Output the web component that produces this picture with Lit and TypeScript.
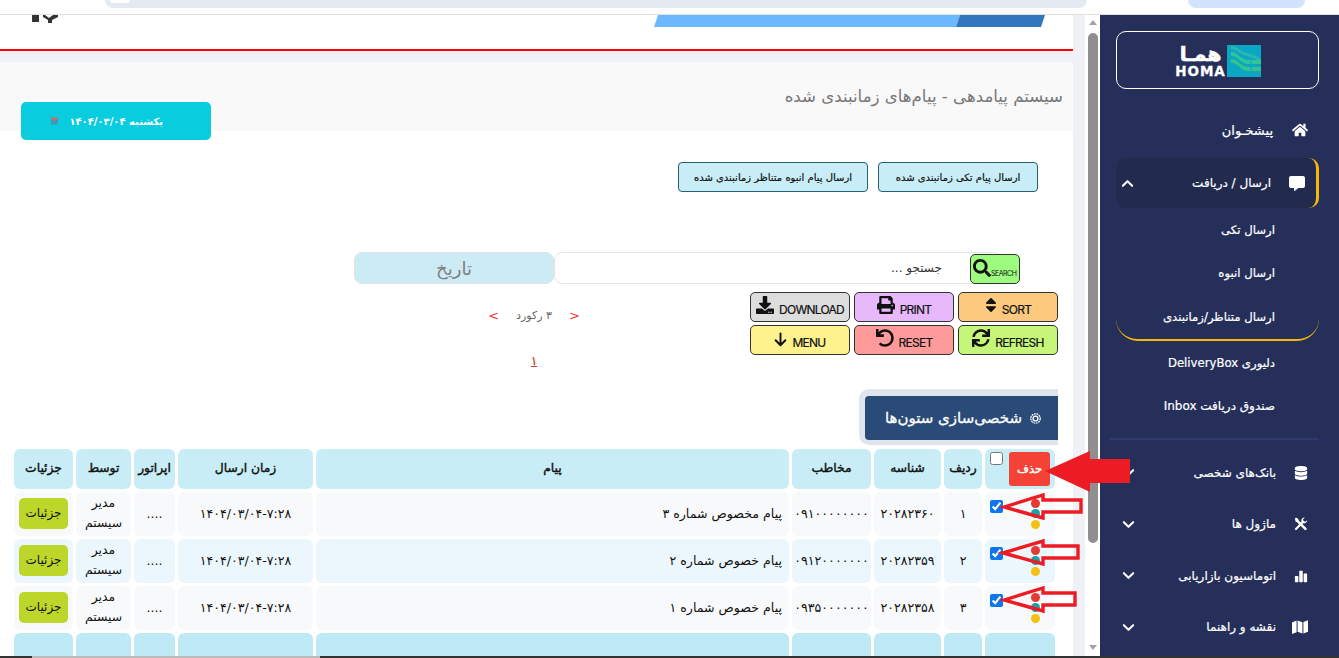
import { LitElement, html, css, svg } from "lit";
import { customElement } from "lit/decorators.js";

const fa = (vb: string, d: string, cls = "") =>
  html`<svg class=${cls} viewBox=${vb} fill="currentColor"><path d=${d}></path></svg>`;

const I = {
  home: fa("0 0 576 512", "M280.37 148.26L96 300.11V464a16 16 0 0 0 16 16l112.06-.29a16 16 0 0 0 15.92-16V368a16 16 0 0 1 16-16h64a16 16 0 0 1 16 16v95.64a16 16 0 0 0 16 16.05L464 480a16 16 0 0 0 16-16V300L295.67 148.26a12.19 12.19 0 0 0-15.3 0zM571.6 251.47L488 182.56V44.05a12 12 0 0 0-12-12h-56a12 12 0 0 0-12 12v72.61L318.47 43a48 48 0 0 0-61 0L4.34 251.47a12 12 0 0 0-1.6 16.9l25.5 31A12 12 0 0 0 45.15 301l235.22-193.74a12.19 12.19 0 0 1 15.3 0L530.9 301a12 12 0 0 0 16.9-1.6l25.5-31a12 12 0 0 0-1.7-16.93z"),
  comment: fa("0 0 512 512", "M448 32H64C29 32 0 61 0 96v256c0 35 29 64 64 64h96v84c0 10 11 15 19 9l125-93h144c35 0 64-29 64-64V96c0-35-29-64-64-64z"),
  db: fa("0 0 448 512", "M448 73.143v45.714C448 159.143 347.667 192 224 192S0 159.143 0 118.857V73.143C0 32.857 100.333 0 224 0s224 32.857 224 73.143zM448 176v102.857C448 319.143 347.667 352 224 352S0 319.143 0 278.857V176c48.125 33.143 136.208 48.572 224 48.572S399.874 209.143 448 176zm0 160v102.857C448 479.143 347.667 512 224 512S0 479.143 0 438.857V336c48.125 33.143 136.208 48.572 224 48.572S399.874 369.143 448 336z"),
  tools: html`<svg viewBox="0 0 16 16" fill="currentColor"><path d="M1.4 12.9 10.2 4.1l1.7 1.7-8.8 8.8a1.2 1.2 0 0 1-1.7-1.7z"></path><path d="M15 3.6a3.6 3.6 0 0 1-4.9 3.4L8.6 5.5A3.6 3.6 0 0 1 12.4.6L10.3 2.7l.6 2.1 2.1.6 2-1.8z"></path><path d="M1 1.7 2.3.7l2.6 1.6.3 1.4 8.9 8.8c.6.6.6 1.6 0 2.1s-1.5.6-2.1 0L3.2 5.8 1.9 5.5z"></path></svg>`,
  chart: html`<svg viewBox="0 0 16 16" fill="currentColor"><rect x="1" y="8" width="4" height="7" rx=".8"></rect><rect x="6" y="2" width="4" height="13" rx=".8"></rect><rect x="11" y="5" width="4" height="10" rx=".8"></rect></svg>`,
  map: html`<svg class="wide" viewBox="0 0 16 16" fill="currentColor"><path d="M0 3.4 4.6 1.6v11.7L0 15zM5.6 1.6l4.8 1.6v11.2l-4.8-1.6zM11.4 3.1 16 1.2v11.6l-4.6 1.8z"></path></svg>`,
  search: fa("0 0 512 512", "M505 442.7L405.3 343c-4.5-4.5-10.6-7-17-7H372c27.6-35.3 44-79.7 44-128C416 93.1 322.9 0 208 0S0 93.1 0 208s93.1 208 208 208c48.3 0 92.7-16.4 128-44v16.3c0 6.4 2.5 12.5 7 17l99.7 99.7c9.4 9.4 24.6 9.4 33.9 0l28.3-28.3c9.4-9.4 9.4-24.6.1-34zM208 336c-70.7 0-128-57.2-128-128 0-70.7 57.2-128 128-128 70.7 0 128 57.2 128 128 0 70.7-57.2 128-128 128z"),
  sort: fa("0 0 320 512", "M41 288h238c21.4 0 32.1 25.9 17 41L177 448c-9.4 9.4-24.6 9.4-33.9 0L24 329c-15.1-15.1-4.4-41 17-41zm255-105L177 64c-9.4-9.4-24.6-9.4-33.9 0L24 183c-15.1 15.1-4.4 41 17 41h238c21.4 0 32.1-25.9 17-41z"),
  print: fa("0 0 512 512", "M448 192V77.25c0-8.49-3.37-16.62-9.37-22.63L393.37 9.37c-6-6-14.14-9.37-22.63-9.37H96C78.33 0 64 14.33 64 32v160c-35.35 0-64 28.65-64 64v112c0 8.84 7.16 16 16 16h48v96c0 17.67 14.33 32 32 32h320c17.67 0 32-14.33 32-32v-96h48c8.84 0 16-7.16 16-16V256c0-35.35-28.65-64-64-64zm-64 256H128v-96h256v96zm0-224H128V64h192v48c0 8.84 7.16 16 16 16h48v96zm48 72c-13.25 0-24-10.75-24-24 0-13.26 10.75-24 24-24s24 10.74 24 24c0 13.25-10.75 24-24 24z"),
  download: fa("0 0 512 512", "M216 0h80c13.3 0 24 10.7 24 24v168h87.7c17.8 0 26.7 21.5 14.1 34.1L269.7 378.3c-7.5 7.5-19.8 7.5-27.3 0L90.1 226.1c-12.6-12.6-3.7-34.1 14.1-34.1H192V24c0-13.3 10.7-24 24-24zm296 376v112c0 13.3-10.7 24-24 24H24c-13.3 0-24-10.7-24-24V376c0-13.3 10.7-24 24-24h146.7l49 49c20.1 20.1 52.5 20.1 72.6 0l49-49H488c13.3 0 24 10.7 24 24zm-124 88c0-11-9-20-20-20s-20 9-20 20 9 20 20 20 20-9 20-20zm64 0c0-11-9-20-20-20s-20 9-20 20 9 20 20 20 20-9 20-20z"),
  undo: fa("0 0 512 512", "M212.333 224.333H12c-6.627 0-12-5.373-12-12V12C0 5.373 5.373 0 12 0h48c6.627 0 12 5.373 12 12v78.112C117.773 39.279 184.26 7.47 258.175 8.007c136.906.994 246.448 111.623 246.157 248.532C504.041 393.258 393.12 504 256.333 504c-64.089 0-122.496-24.313-166.51-64.215-5.099-4.622-5.334-12.554-.467-17.42l33.967-33.967c4.474-4.474 11.662-4.717 16.401-.525C170.76 415.336 211.58 432 256.333 432c97.268 0 176-78.716 176-176 0-97.267-78.716-176-176-176-58.496 0-110.28 28.476-142.274 72.333h98.274c6.627 0 12 5.373 12 12v48c0 6.627-5.373 12-12 12z"),
  sync: fa("0 0 512 512", "M440.65 12.57l4 82.77A247.16 247.16 0 0 0 255.83 8C134.73 8 33.91 94.92 12.29 209.82A12 12 0 0 0 24.09 224h49.05a12 12 0 0 0 11.67-9.26 175.91 175.91 0 0 1 317-56.94l-101.46-4.86a12 12 0 0 0-12.57 12v47.41a12 12 0 0 0 12 12H500a12 12 0 0 0 12-12V12a12 12 0 0 0-12-12h-47.37a12 12 0 0 0-11.98 12.57zM255.83 432a175.61 175.61 0 0 1-146-77.8l101.8 4.87a12 12 0 0 0 12.57-12v-47.4a12 12 0 0 0-12-12H12a12 12 0 0 0-12 12V500a12 12 0 0 0 12 12h47.35a12 12 0 0 0 12-12.6l-4.15-82.57A247.17 247.17 0 0 0 255.83 504c121.11 0 221.93-86.92 243.55-201.82a12 12 0 0 0-11.8-14.18h-49.05a12 12 0 0 0-11.67 9.26A175.86 175.86 0 0 1 255.83 432z"),
  arrow: html`<svg viewBox="0 0 16 18" fill="none" stroke="currentColor" stroke-width="2.4" stroke-linecap="round" stroke-linejoin="round"><path d="M8 1.5V16M2 10l6 6 6-6"></path></svg>`,
};

const chevron = (up = false) =>
  html`<svg class="chev" viewBox="0 0 14 9" fill="none" stroke="currentColor" stroke-width="2.2" stroke-linecap="round" stroke-linejoin="round"><path d=${up ? "M2 7l5-5 5 5" : "M2 2l5 5 5-5"}></path></svg>`;

const rows = [
  { n: "۱", id: "۲۰۲۸۲۳۶۰", to: "۰۹۱۰۰۰۰۰۰۰۰", msg: "پیام مخصوص شماره ۳" },
  { n: "۲", id: "۲۰۲۸۲۳۵۹", to: "۰۹۱۲۰۰۰۰۰۰۰", msg: "پیام خصوص شماره ۲" },
  { n: "۳", id: "۲۰۲۸۲۳۵۸", to: "۰۹۳۵۰۰۰۰۰۰۰", msg: "پیام خصوص شماره ۱" },
];

const tools = [
  { t: "SORT", i: I.sort, c: "sort" },
  { t: "PRINT", i: I.print, c: "print" },
  { t: "DOWNLOAD", i: I.download, c: "download" },
  { t: "REFRESH", i: I.sync, c: "refresh" },
  { t: "RESET", i: I.undo, c: "reset" },
  { t: "MENU", i: I.arrow, c: "menu" },
];

const outlineArrow = (y: number, tip: number, right: number) => svg`<polygon points="${tip},${y} 1043,${y - 12} 1043,${y - 7} ${right},${y - 7} ${right},${y + 5} 1043,${y + 5} 1043,${y + 11}" fill="none" stroke="#ed1c24" stroke-width="3.4"></polygon>`;

@customElement("app-root")
export class AppRoot extends LitElement {
  static styles = css`
    :host { display: block; width: 1339px; height: 658px; overflow: hidden; position: relative; background: #fff;
      font-family: "DejaVu Sans", "Noto Sans", sans-serif; color: #111; }
    * { box-sizing: border-box; }
    svg { display: block; }
    .chrome { height: 15px; border-bottom: 1px solid #e0e0e0; display: flex; direction: ltr; padding-left: 105px; }
    .omni { width: 982px; height: 8px; background: #e5e9f2; border-radius: 0 0 14px 14px; padding-left: 5px; }
    .omni i { display: block; width: 20px; height: 3px; background: #fff; border-radius: 0 0 10px 10px; }
    .pill { width: 117px; height: 8px; margin-left: 101px; background: #d3e3fd; border-radius: 0 0 14px 14px; }
    .body { height: 641px; display: grid; grid-template-columns: 239px 27px 1073px; direction: rtl; overflow: hidden; }
    .strip { height: 2px; background: #333; padding-left: 32px; direction: ltr; }
    .strip i { display: block; width: 288px; height: 2px; background: #bbb; }

    /* sidebar */
    .side { background: #262f5a; color: #fff; padding: 16px 20px 0 16px; }
    .logo { height: 58px; border: 1px solid #fff; border-radius: 10px; display: flex; direction: ltr; justify-content: center; align-items: center; padding-top: 1px; }
    .logo-text { width: 53px; height: 32px; display: flex; flex-direction: column; align-items: center; line-height: 1; font-weight: 700; color: #fff; }
    .logo-fa { font-size: 20px; height: 20px; line-height: 18px; direction: rtl; white-space: nowrap; -webkit-text-stroke: .6px #fff; }
    .logo-en { font-size: 13.5px; height: 12px; line-height: 12px; letter-spacing: 0.9px; -webkit-text-stroke: .3px #fff; }
    .logo-box { width: 34px; height: 32px; }
    .nav { margin-top: 16px; }
    .item { height: 50px; display: flex; align-items: center; padding: 0 11px 0 6px; gap: 17px; font-size: 12px; -webkit-text-stroke: .2px #fff; }
    .item .ic { width: 16px; height: 16px; flex: none; display: flex; align-items: center; justify-content: flex-start; }
    .item .ic svg { width: 14px; height: 14px; }
    .item .ic svg.wide, .item.first .ic svg { width: 16px; height: 16px; }
    .item.first { font-size: 13px; gap: 19px; }
    .chev { width: 13px; height: 9px; margin-right: auto; flex: none; }
    .item.active { background: #222a4e; margin-top: 3px; border-right: 3px solid #f5b80a; border-radius: 10px; padding: 0 11px 0 5px; gap: 18px; height: 50px; }
    .item.active .ic svg { width: 16px; height: 16px; }
    .item.tall { height: 51.5px; gap: 16px; }
    .subs { border-bottom: 2px solid #f5b80a; border-radius: 0 0 22px 22px; height: 133px; }
    .sub { height: 43.5px; display: flex; align-items: center; padding-right: 44px; font-size: 11.7px; -webkit-text-stroke: .2px #fff; }
    .sub.after { height: 43px; font-size: 12px; }
    .sub.deliv { font-size: 11.7px; }
    .sep { height: 2px; background: #2f3a70; margin: 11px 0 7px 0; width: 210px; }

    .rail { display: grid; grid-template-columns: 15px 12px; }
    .rail-fill { background: #f0f1f6; }
    .track { background: #fff; display: flex; flex-direction: column; align-items: center; padding-top: 5px; }
    .tri { width: 0; height: 0; flex: none; border-left: 4px solid transparent; border-right: 4px solid transparent; border-bottom: 5px solid #a3a3a3; }
    .thumb { width: 10px; height: 510px; flex: none; background: #8f8f8f; border-radius: 5px; margin-top: 8px; }
    .tri.down { border-bottom: 0; border-top: 5px solid #a3a3a3; margin-top: 102px; }

    /* main */
    .main { overflow: hidden; display: flex; flex-direction: column; height: 641px; background: #fff; }
    .head { height: 36px; flex: none; border-bottom: 2px solid #f00; padding-right: 28px; display: flex; justify-content: space-between; align-items: flex-start; }
    .banner { width: 391px; height: 12px; }
    .glyph { width: 30px; height: 8px; margin-left: 30px; }
    .gap { height: 11px; flex: none; background: #f0f1f6; }
    .titlebar { height: 69px; flex: none; background: #f9f9fa; display: flex; align-items: center; padding: 0 10px 0 0; font-size: 16.6px; color: #777; }
    .date { width: 190px; height: 38px; flex: none; margin: -29px 0 0 21px; align-self: flex-end; background: #09cddf; border-radius: 5px; color: #fff; font-size: 10px; font-weight: 700; display: flex; align-items: center; padding-right: 48px; gap: 11px; }
    .date svg { width: 7px; height: 8px; opacity: .85; }
    .acts { display: flex; gap: 10px; margin: 22px 35px 0 0; flex: none; }
    .acts div { height: 30px; background: #c8edf6; border: 1px solid #25606f; border-radius: 4px; font-size: 10px; -webkit-text-stroke: .2px #111; display: flex; align-items: center; justify-content: center; color: #111; }
    .a1 { width: 160px; } .a2 { width: 190px; }
    .searchrow { display: flex; margin: 60px 53px 0 0; height: 32px; flex: none; align-items: flex-start; }
    .sbtn { width: 50px; height: 30px; margin: 2px 0 0 -32px; position: relative; z-index: 1; background: #9dfb7f; border: 1px solid #333; border-radius: 5px; direction: ltr; display: flex; align-items: center; padding: 0 0 0 2px; font-family: Inter, sans-serif; font-size: 7px; letter-spacing: -0.5px; }
    .sbtn svg { width: 18px; height: 18px; margin-top: -3px; }
    .sbtn span { margin-top: 9px; }
    .sinput { width: 448px; height: 32px; border: 1.5px solid #e4e4e4; border-radius: 8px; background: #fff; display: flex; align-items: center; padding-right: 59px; font-size: 12px; color: #333; }
    .sdate { width: 200px; height: 32px; background: #cdebf5; border: 1.5px solid #e2e2e2; border-radius: 8px; color: #808080; font-size: 18px; display: flex; align-items: center; justify-content: center; }
    .toolrow { display: flex; height: 63px; margin: 8px 15px 0 0; flex: none; }
    .tools { width: 308px; display: grid; grid-template-columns: repeat(3, 100px); grid-auto-rows: 30px; gap: 3px 4px; }
    .tool { border: 1px solid #333; border-radius: 5px; display: flex; direction: ltr; align-items: center; justify-content: center; gap: 5px; font-family: Inter, sans-serif; font-size: 12px; letter-spacing: -0.75px; color: #111; -webkit-text-stroke: .2px #111; }
    .tool svg { width: 18px; height: 18px; flex: none; margin-top: -4px; }
    .tool.sort svg { width: 12px; }
    .tool.menu svg { width: 13px; height: 15px; margin-top: -1px; }
    .tool span { margin-top: 5px; }
    .sort { background: #fdc97e; } .print { background: #e7b9fa; } .download { background: #ddd; }
    .refresh { background: #c5f67a; } .reset { background: #ff9a9a; } .menu { background: #fdf28b; }
    .pager { width: 200px; margin-right: 116px; display: flex; flex-direction: column; align-items: center; }
    .pline { display: flex; direction: ltr; gap: 17px; align-items: center; margin-top: 14px; font-size: 11px; color: #666; height: 18px; flex: none; }
    .pline span { direction: rtl; }
    .pline b { color: #f33; font-weight: 400; font-size: 13px; }
    .pnum { margin-top: 19px; color: #c0392b; font-size: 11.5px; line-height: 14px; text-decoration: underline; -webkit-text-stroke: .3px #c0392b; flex: none; transform: translateY(11px); }
    .cust { width: 199px; height: 56px; flex: none; margin: 34px 15px 0 0; background: #e0e4ec; border-top-left-radius: 10px; border-bottom-left-radius: 10px; padding: 7px 0 5px 6px; }
    .cust div { height: 44px; background: #2a4a78; border-radius: 4px 0 0 4px; color: #fff; font-size: 15px; -webkit-text-stroke: .3px #fff; display: flex; align-items: center; padding-right: 16px; gap: 7px; }
    .cust svg { width: 13px; height: 13px; }
    .table { margin: 4px 18px 0 14px; display: grid; flex: none; grid-template-columns: 70px 38px 67px 79px 473px 135px 41px 55px 59px; grid-template-rows: 40px 44px 44px 44px 30px; gap: 3px; font-size: 12.6px; }
    .c { border-radius: 6px; display: flex; align-items: center; justify-content: center; text-align: center; padding-bottom: 2px; }
    .h { background: #c8edf6; font-size: 12.3px; -webkit-text-stroke: .4px #111; }
    .r1 { background: #f8f9fa; } .r2 { background: #ebf7fd; }
    .f { background: #bfeaf5; }
    .msg { justify-content: flex-start; padding-right: 7px; }
    .phone { letter-spacing: -0.9px; }
    .headcheck { justify-content: flex-start; align-items: flex-start; padding: 3px 5px; }
    .del { width: 41px; height: 34px; background: #f44336; color: #fff; border-radius: 3px; font-size: 11.5px; -webkit-text-stroke: .4px #fff; display: flex; align-items: center; justify-content: center; flex: none; }
    .check { margin: 0 auto 0 0; width: 13px; height: 13px; accent-color: #0b76ef; flex: none; }
    .rowcheck { justify-content: flex-start; align-items: flex-start; padding: 6.5px 15.5px 0 5px; }
    .rowcheck .check { margin-top: 1px; margin-right: auto; }
    .dots { display: flex; flex-direction: column; gap: 1.5px; flex: none; }
    .dots i { display: block; width: 9px; height: 9px; border-radius: 50%; }
    .dot-r { background: #e53935; } .dot-t { background: #12a5a5; } .dot-y { background: #f5c010; }
    .by { line-height: 20px; font-size: 12.4px; }
    .det { width: 49px; height: 31px; background: #bcd62a; border-radius: 5px; font-size: 12px; display: flex; align-items: center; justify-content: center; }
    .annot { position: absolute; left: 0; top: 0; width: 1339px; height: 658px; pointer-events: none; }
  `;

  render() {
    return html`
      <div class="chrome"><div class="omni"><i></i></div><div class="pill"></div></div>
      <div class="body">
        ${this.sidebar()}
        <div class="rail"><div class="track"><div class="tri"></div><div class="thumb"></div><div class="tri down"></div></div><div class="rail-fill"></div></div>
        ${this.main()}
      </div>
      <div class="strip"><i></i></div>
      <svg class="annot" viewBox="0 0 1339 658">
        <polygon points="1045,471 1090,451 1090,459 1130,459 1130,483 1090,483 1090,492" fill="#ed1c24"></polygon>
        ${outlineArrow(507, 1004, 1081)}
        ${outlineArrow(553, 1003, 1078)}
        ${outlineArrow(600, 1004, 1075)}
      </svg>
    `;
  }

  sidebar() {
    return html`<aside class="side">
      <div class="logo">
        <div class="logo-text"><span class="logo-fa">همـا</span><span class="logo-en">HOMA</span></div>
        <svg class="logo-box" viewBox="0 0 34 32">
          <rect width="34" height="32" fill="#0aa6c4"></rect>
          <path d="M4 1c7 0 9 6 16 7 5 1 9 3 14 6v3c-5-3-9-5-14-6C13 10 11 4 4 4z" fill="#2cb9ac"></path>
          <path d="M4 7c7 0 9 7 16 8h14v4H20C13 18 11 11 4 11z" fill="#2fc49a"></path>
          <path d="M4 14c7 0 9 7 16 8h14v4H20C13 25 11 18 4 18z" fill="#34c28e"></path>
          <path d="M24 12v16" stroke="#0aa6c4" stroke-width="1"></path>
        </svg>
      </div>
      <nav class="nav">
        <div class="item first"><span class="ic">${I.home}</span><span>پیشخـوان</span></div>
        <div class="item active"><span class="ic">${I.comment}</span><span>ارسال / دریافت</span>${chevron(true)}</div>
        <div class="subs">
          <div class="sub">ارسال تکی</div>
          <div class="sub">ارسال انبوه</div>
          <div class="sub">ارسال متناظر/زمانبندی</div>
        </div>
        <div class="sub after deliv">دلیوری DeliveryBox</div>
        <div class="sub after">صندوق دریافت Inbox</div>
        <div class="sep"></div>
        <div class="item tall"><span class="ic">${I.db}</span><span>بانک‌های شخصی</span>${chevron()}</div>
        <div class="item tall"><span class="ic">${I.tools}</span><span>ماژول ها</span>${chevron()}</div>
        <div class="item tall"><span class="ic">${I.chart}</span><span>اتوماسیون بازاریابی</span>${chevron()}</div>
        <div class="item tall"><span class="ic">${I.map}</span><span>نقشه و راهنما</span>${chevron()}</div>
      </nav>
    </aside>`;
  }

  main() {
    return html`<main class="main">
      <div class="head">
        <svg class="banner" viewBox="0 0 391 12"><polygon points="4,0 306,0 302,12 0,12" fill="#6cb8ff"></polygon><polygon points="306,0 391,0 387,12 302,12" fill="#3276be"></polygon></svg>
        <svg class="glyph" viewBox="0 0 30 8"><path d="M2 0h7v7H2zM13 0h2l4 3 4-3h5v2l-6 3v3h-4V5l-5-3z" fill="#333"></path></svg>
      </div>
      <div class="gap"></div>
      <div class="titlebar">سیستم پیامدهی - پیام‌های زمانبندی شده</div>
      <div class="date"><span>یکشنبه ۱۴۰۴/۰۳/۰۴</span><svg viewBox="0 0 8 8"><rect width="8" height="8" fill="#4b8fb0"></rect><rect width="8" height="2.5" fill="#e0605a"></rect></svg></div>
      <div class="acts"><div class="a1">ارسال پیام تکی زمانبندی شده</div><div class="a2">ارسال پیام انبوه متناظر زمانبندی شده</div></div>
      <div class="searchrow">
        <div class="sbtn">${I.search}<span>SEARCH</span></div>
        <div class="sinput">جستجو ...</div>
        <div class="sdate">تاریخ</div>
      </div>
      <div class="toolrow">
        <div class="tools">${tools.map((t) => html`<div class="tool ${t.c}">${t.i}<span>${t.t}</span></div>`)}</div>
        <div class="pager">
          <div class="pline"><b>&lt;</b><span>۳ رکورد</span><b>&gt;</b></div>
          <div class="pnum">۱</div>
        </div>
      </div>
      <div class="cust"><div><svg viewBox="0 0 16 16" fill="none" stroke="#fff"><circle cx="8" cy="8" r="3" stroke-width="1.6"></circle><circle cx="8" cy="8" r="5.8" stroke-width="1.6" stroke-dasharray="2.2 0.9"></circle></svg><span>شخصی‌سازی ستون‌ها</span></div></div>
      <div class="table">
        <div class="c h headcheck"><div class="del">حذف</div><input class="check" type="checkbox" /></div>
        ${["ردیف", "شناسه", "مخاطب", "پیام", "زمان ارسال", "اپراتور", "توسط", "جزئیات"].map((t) => html`<div class="c h">${t}</div>`)}
        ${rows.map((r, i) => {
          const k = i % 2 ? "r2" : "r1";
          return html`
            <div class="c rowcheck ${k}"><div class="dots"><i class="dot-r"></i><i class="dot-t"></i><i class="dot-y"></i></div><input class="check" type="checkbox" checked /></div>
            <div class="c ${k}">${r.n}</div>
            <div class="c ${k}">${r.id}</div>
            <div class="c phone ${k}">${r.to}</div>
            <div class="c msg ${k}">${r.msg}</div>
            <div class="c ${k}">۱۴۰۴/۰۳/۰۴-۷:۲۸</div>
            <div class="c ${k}">....</div>
            <div class="c by ${k}">مدیر سیستم</div>
            <div class="c ${k}"><div class="det">جزئیات</div></div>`;
        })}
        ${Array.from({ length: 9 }).map(() => html`<div class="c f"></div>`)}
      </div>
    </main>`;
  }
}
